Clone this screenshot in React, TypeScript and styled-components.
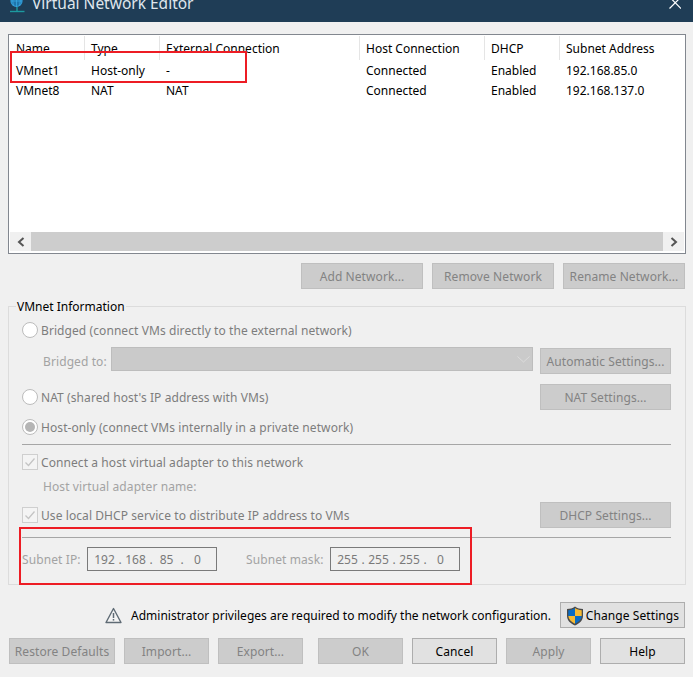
import React from 'react';
import styled, { createGlobalStyle } from 'styled-components';

const Global = createGlobalStyle`
  html, body { margin: 0; padding: 0; background: #f0f0f0; }
  * { box-sizing: border-box; }
`;

const Window = styled.div`
  position: relative;
  width: 693px;
  height: 677px;
  overflow: hidden;
  background: #f0f0f0;
  font-family: "Noto Sans", sans-serif;
  font-size: 12px;
  line-height: 16px;
  color: #000;
`;

const TitleBar = styled.div`
  display: flex;
  justify-content: space-between;
  height: 22px;
  padding: 0 12px 0 10px;
  overflow: hidden;
  background: #1f3d56;
  color: #dfe6ec;
`;

const TitleLeft = styled.div`
  display: flex;
  gap: 7px;
  height: 22px;
  margin-top: -7px;
  font-size: 15.5px;
  line-height: 20px;
`;

const GlobeIcon = styled.svg`
  flex: none;
  margin-top: 7px;
`;

const CloseIcon = styled.svg`
  flex: none;
`;

const Content = styled.div`
  padding: 12px 7px 0 8px;
`;

const ListBox = styled.div`
  display: flex;
  flex-direction: column;
  height: 220px;
  padding: 1px;
  background: #fff;
  border: 1px solid #82878f;
`;

const Rows = styled.div`
  flex: 1;
`;

const Row = styled.div<{ $height: number }>`
  display: grid;
  grid-template-columns: 75px 75px 200px 125px 75px 1fr;
  align-items: center;
  height: ${(p) => p.$height}px;
`;

const HeaderCell = styled.div`
  height: 24px;
  padding-left: 6px;
  line-height: 25px;
  border-right: 1px solid #e5e5e5;
  &:last-child { border-right: 0; }
`;

const Cell = styled.div`
  padding: 2px 0 0 6px;
`;

const ScrollBar = styled.div`
  display: flex;
  height: 19px;
  margin-bottom: 1px;
`;

const ScrollButton = styled.div`
  display: flex;
  align-items: center;
  justify-content: center;
  width: 21px;
  background: #f0f0f0;
  color: #555;
`;

const ScrollTrack = styled.div`
  flex: 1;
  background: #cdcdcd;
`;

const Button = styled.div<{ $width: number; $enabled?: boolean }>`
  display: flex;
  align-items: center;
  justify-content: center;
  gap: 2px;
  flex: none;
  width: ${(p) => p.$width}px;
  height: 26px;
  padding-top: 2px;
  letter-spacing: 0.08px;
  white-space: nowrap;
  background: ${(p) => (p.$enabled ? '#e1e1e1' : '#cccccc')};
  border: 1px solid ${(p) => (p.$enabled ? '#adadad' : '#bfbfbf')};
  color: ${(p) => (p.$enabled ? '#000' : '#838383')};
`;

const ButtonRow = styled.div`
  display: flex;
  justify-content: flex-end;
  gap: 9px;
  margin-top: 9px;
  padding-right: 1px;
`;

const Group = styled.fieldset`
  height: 287px;
  margin: 9px 0 0;
  padding: 0 14px 0 13px;
  border: 1px solid #dcdcdc;
  border-radius: 0;
  min-width: 0;
`;

const Legend = styled.legend`
  margin-left: -6px;
  padding: 0 1px;
  height: 16px;
  line-height: 18px;
`;

const OptionRow = styled.div<{ $height: number }>`
  display: flex;
  align-items: center;
  justify-content: space-between;
  height: ${(p) => p.$height}px;
`;

const Option = styled.div`
  display: flex;
  align-items: center;
  gap: 3px;
  color: #7d7d7d;
  white-space: nowrap;
  letter-spacing: 0.08px;
`;

const OptionText = styled.span`
  padding-top: 2px;
`;

const Radio = styled.div<{ $checked?: boolean }>`
  display: flex;
  align-items: center;
  justify-content: center;
  width: 16px;
  height: 16px;
  background: #fff;
  border: 1px solid #bcbcbc;
  border-radius: 50%;
  &::after {
    content: '';
    display: ${(p) => (p.$checked ? 'block' : 'none')};
    width: 10px;
    height: 10px;
    border-radius: 50%;
    background: #b5b5b5;
  }
`;

const CheckBox = styled.div`
  display: flex;
  align-items: center;
  justify-content: center;
  width: 16px;
  height: 16px;
  background: #f4f4f4;
  border: 1px solid #cfcfcf;
`;

const SoftLabel = styled.div<{ $width?: number }>`
  flex: none;
  width: ${(p) => (p.$width ? `${p.$width}px` : 'auto')};
  padding-top: 2px;
  letter-spacing: 0.1px;
  color: #a3a3a3;
  white-space: nowrap;
`;

const BridgedField = styled.div`
  display: flex;
  align-items: center;
  padding-left: 21px;
`;

const Select = styled.div`
  display: flex;
  align-items: center;
  justify-content: flex-end;
  width: 422px;
  height: 24px;
  margin-top: -4px;
  padding-right: 2px;
  background: #cacaca;
  border: 1px solid #bdbdbd;
  color: #dcdcdc;
`;

const Divider = styled.div<{ $top?: number }>`
  height: 1px;
  margin-top: ${(p) => p.$top ?? 0}px;
  background: #a6a6a6;
`;

const SubnetRow = styled.div`
  display: flex;
  align-items: center;
  height: 42px;
`;

const IpField = styled.div`
  display: grid;
  grid-template-columns: 24px 7px 24px 7px 24px 7px 24px;
  width: 130px;
  height: 24px;
  padding-left: 4.5px;
  line-height: 23px;
  text-align: center;
  border: 1px solid #7a7a7a;
  color: #7a7a7a;
`;

const SubnetGap = styled.div`
  width: 29px;
`;

const NoticeRow = styled.div`
  display: flex;
  align-items: center;
  justify-content: flex-end;
  height: 26px;
  margin-top: 17px;
  padding-right: 1px;
`;

const NoticeText = styled.div`
  margin: 2px 9px 0 9px;
  letter-spacing: 0.015px;
  white-space: nowrap;
`;

const FooterRow = styled.div`
  display: flex;
  justify-content: space-between;
  margin: 10px 1px 0 1px;
`;

const FooterGroup = styled.div`
  display: flex;
  gap: 9px;
`;

const Mark = styled.div<{ $left: number; $top: number; $width: number; $height: number }>`
  position: absolute;
  left: ${(p) => p.$left}px;
  top: ${(p) => p.$top}px;
  width: ${(p) => p.$width}px;
  height: ${(p) => p.$height}px;
  border: 2px solid #ed1c24;
`;

const columns = ['Name', 'Type', 'External Connection', 'Host Connection', 'DHCP', 'Subnet Address'];
const networks = [
  ['VMnet1', 'Host-only', '-', 'Connected', 'Enabled', '192.168.85.0'],
  ['VMnet8', 'NAT', 'NAT', 'Connected', 'Enabled', '192.168.137.0'],
];

const Check = () => (
  <svg width="12" height="12" viewBox="0 0 12 12" fill="none" stroke="#c4c4c4" strokeWidth="1.3">
    <path d="M1.5 6.5 L4.5 9.5 L10.5 2.5" />
  </svg>
);

const Chevron = ({ left }: { left?: boolean }) => (
  <svg width="8" height="10" viewBox="0 0 8 10" fill="none" stroke="#555" strokeWidth="2">
    <path d={left ? 'M6.5 1 L2 5 L6.5 9' : 'M1.5 1 L6 5 L1.5 9'} />
  </svg>
);

const Globe = () => (
  <GlobeIcon width="15" height="13" viewBox="0 0 15 13" fill="none">
    <circle cx="6.5" cy="1" r="5.5" fill="#1f76ad" stroke="#2f9ad6" strokeWidth="1.2" />
    <path d="M6.5 -5 V7 M1 1 H12 M3.5 -4 Q2 1 3.5 6 M9.5 -4 Q11 1 9.5 6" stroke="#37a6e0" strokeWidth="0.8" />
    <path d="M7 7 V11" stroke="#1d9aa0" strokeWidth="1.4" />
    <path d="M0 11.5 H14.5" stroke="#1d9aa0" strokeWidth="1.4" />
  </GlobeIcon>
);

const Close = () => (
  <CloseIcon width="12" height="9" viewBox="0 0 12 9" fill="none" stroke="#fff" strokeWidth="1.2">
    <path d="M0.5 -3 L12 8.5 M12 -3 L0.5 8.5" />
  </CloseIcon>
);

const Warning = () => (
  <svg width="17" height="17" viewBox="0 0 17 17" fill="none">
    <path d="M8.5 1.5 L16 15.5 H1 Z" fill="#f4f4f4" stroke="#5f6b75" strokeWidth="1.4" strokeLinejoin="round" />
    <path d="M8.5 6 V11" stroke="#5f6b75" strokeWidth="1.5" />
    <path d="M8.5 12 V13.6" stroke="#5f6b75" strokeWidth="1.5" />
  </svg>
);

const Shield = () => (
  <svg width="18" height="20" viewBox="0 0 18 20">
    <path d="M9 0.5 C6.5 2.3 4 3 1 3 V10 C1 14.5 4.5 17.5 9 19.5 C13.5 17.5 17 14.5 17 10 V3 C14 3 11.5 2.3 9 0.5 Z" fill="#4a4a4a" />
    <path d="M9 2 C7 3.4 5 4 2.3 4.2 V10 H9 Z" fill="#0a6cc4" />
    <path d="M9 2 C11 3.4 13 4 15.7 4.2 V10 H9 Z" fill="#f7bb33" />
    <path d="M2.3 10 H9 V17.8 C5.3 16 2.6 13.6 2.3 10 Z" fill="#f7bb33" />
    <path d="M15.7 10 H9 V17.8 C12.7 16 15.4 13.6 15.7 10 Z" fill="#0a6cc4" />
  </svg>
);

const IpAddress = ({ value }: { value: string }) => (
  <IpField>
    {value.split('.').map((octet, i) => (
      <React.Fragment key={i}>
        {i > 0 && <span>.</span>}
        <span>{octet}</span>
      </React.Fragment>
    ))}
  </IpField>
);

export default function App() {
  return (
    <Window>
      <Global />
      <TitleBar>
        <TitleLeft>
          <Globe />
          Virtual Network Editor
        </TitleLeft>
        <Close />
      </TitleBar>
      <Content>
        <ListBox>
          <Rows>
            <Row $height={24}>
              {columns.map((c) => (
                <HeaderCell key={c}>{c}</HeaderCell>
              ))}
            </Row>
            {networks.map((n) => (
              <Row key={n[0]} $height={20}>
                {n.map((v, i) => (
                  <Cell key={i}>{v}</Cell>
                ))}
              </Row>
            ))}
          </Rows>
          <ScrollBar>
            <ScrollButton>
              <Chevron left />
            </ScrollButton>
            <ScrollTrack />
            <ScrollButton>
              <Chevron />
            </ScrollButton>
          </ScrollBar>
        </ListBox>
        <ButtonRow>
          <Button $width={122}>Add Network...</Button>
          <Button $width={122}>Remove Network</Button>
          <Button $width={122}>Rename Network...</Button>
        </ButtonRow>
        <Group>
          <Legend>VMnet Information</Legend>
          <OptionRow $height={32}>
            <Option>
              <Radio />
              <OptionText>Bridged (connect VMs directly to the external network)</OptionText>
            </Option>
          </OptionRow>
          <OptionRow $height={30}>
            <BridgedField>
              <SoftLabel $width={68}>Bridged to:</SoftLabel>
              <Select>
                <svg width="13" height="7" viewBox="0 0 13 7" fill="none" stroke="currentColor">
                  <path d="M0.5 0.5 L6.5 6 L12.5 0.5" />
                </svg>
              </Select>
            </BridgedField>
            <Button $width={131}>Automatic Settings...</Button>
          </OptionRow>
          <OptionRow $height={42}>
            <Option>
              <Radio />
              <OptionText>NAT (shared host's IP address with VMs)</OptionText>
            </Option>
            <Button $width={131}>NAT Settings...</Button>
          </OptionRow>
          <OptionRow $height={18}>
            <Option>
              <Radio $checked />
              <OptionText>Host-only (connect VMs internally in a private network)</OptionText>
            </Option>
          </OptionRow>
          <Divider $top={8} />
          <OptionRow $height={34}>
            <Option>
              <CheckBox>
                <Check />
              </CheckBox>
              <OptionText>Connect a host virtual adapter to this network</OptionText>
            </Option>
          </OptionRow>
          <OptionRow $height={14}>
            <BridgedField>
              <SoftLabel>Host virtual adapter name:</SoftLabel>
            </BridgedField>
          </OptionRow>
          <OptionRow $height={44}>
            <Option>
              <CheckBox>
                <Check />
              </CheckBox>
              <OptionText>Use local DHCP service to distribute IP address to VMs</OptionText>
            </Option>
            <Button $width={131}>DHCP Settings...</Button>
          </OptionRow>
          <Divider />
          <SubnetRow>
            <SoftLabel $width={65}>Subnet IP:</SoftLabel>
            <IpAddress value="192.168.85.0" />
            <SubnetGap />
            <SoftLabel $width={84}>Subnet mask:</SoftLabel>
            <IpAddress value="255.255.255.0" />
          </SubnetRow>
        </Group>
        <NoticeRow>
          <Warning />
          <NoticeText>Administrator privileges are required to modify the network configuration.</NoticeText>
          <Button $width={125} $enabled>
            <Shield />
            Change Settings
          </Button>
        </NoticeRow>
        <FooterRow>
          <FooterGroup>
            <Button $width={106}>Restore Defaults</Button>
            <Button $width={85}>Import...</Button>
            <Button $width={85}>Export...</Button>
          </FooterGroup>
          <FooterGroup>
            <Button $width={85}>OK</Button>
            <Button $width={85} $enabled>Cancel</Button>
            <Button $width={85}>Apply</Button>
            <Button $width={85} $enabled>Help</Button>
          </FooterGroup>
        </FooterRow>
      </Content>
      <Mark $left={10} $top={51} $width={237} $height={32} />
      <Mark $left={19} $top={527} $width={453} $height={58} />
    </Window>
  );
}
